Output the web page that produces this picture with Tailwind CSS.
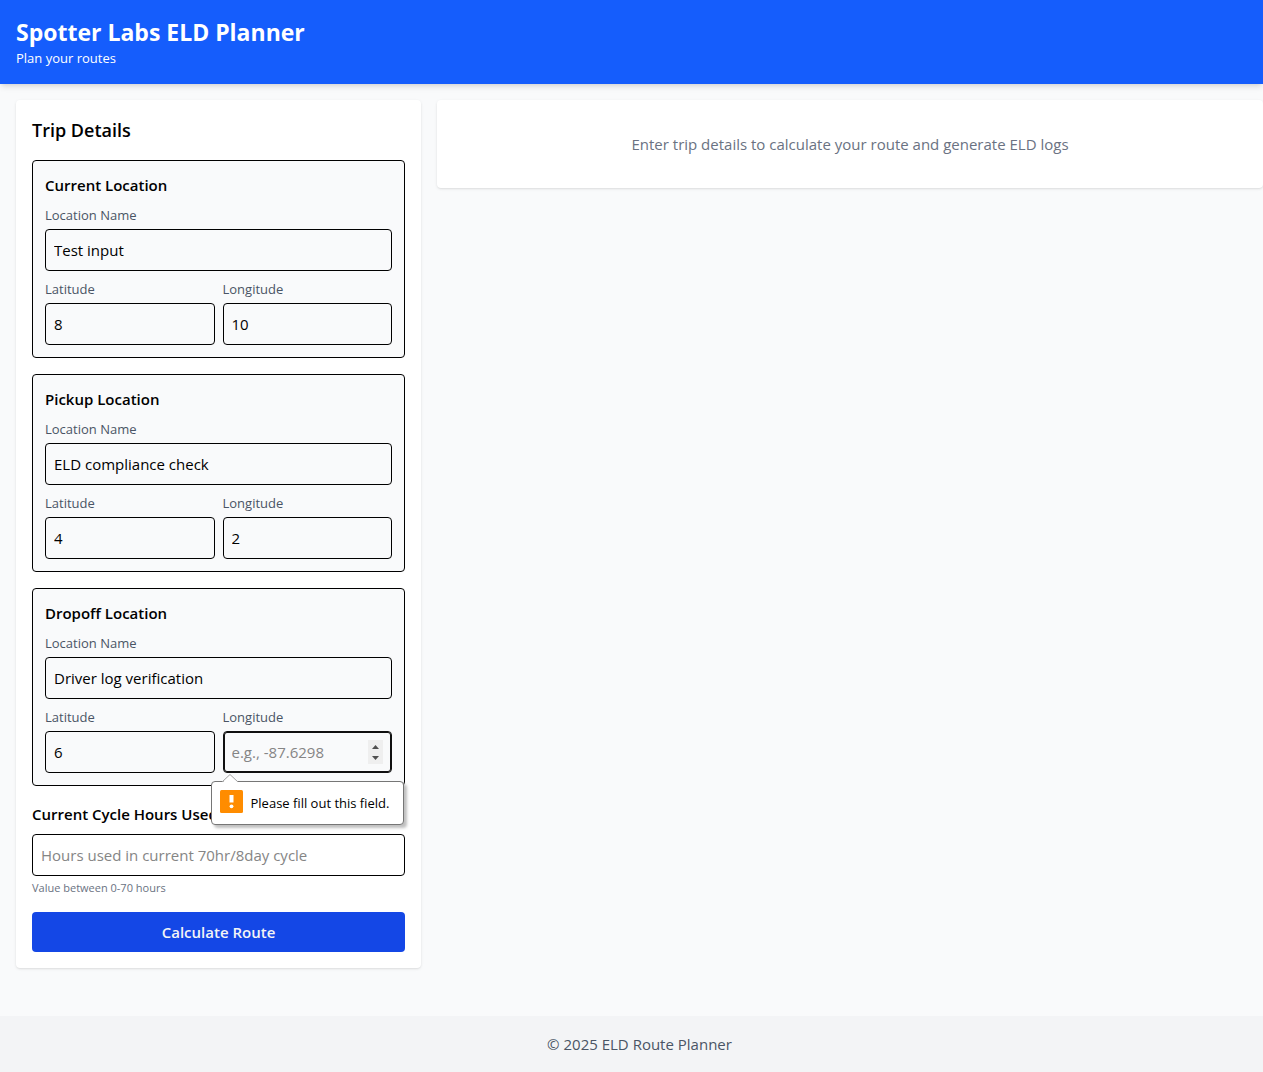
<!DOCTYPE html>
<html lang="en">
<head>
<meta charset="utf-8">
<meta name="viewport" content="width=device-width, initial-scale=1">
<title>Spotter Labs ELD Planner</title>
<script src="https://cdn.jsdelivr.net/npm/@tailwindcss/browser@4"></script>
</head>
<body class="flex min-h-screen flex-col bg-gray-50 font-['Open_Sans','Noto_Sans',sans-serif] text-[15px] leading-6 text-black">
  <header class="bg-[#155dfc] p-4 text-white shadow-md">
    <h1 class="text-[23px] leading-8 font-bold">Spotter Labs ELD Planner</h1>
    <p class="text-[13px] leading-5">Plan your routes</p>
  </header>

  <main class="grid grow grid-cols-3 items-start gap-4 py-4 pl-4">
    <section class="rounded bg-white p-4 shadow-sm">
      <h2 class="mb-4 text-[18px] leading-7 font-semibold">Trip Details</h2>
      <form class="flex flex-col gap-4" novalidate>
        <section class="rounded border border-black bg-gray-50 p-3">
          <h3 class="mb-2 font-semibold">Current Location</h3>
          <label for="cur-name" class="mb-1 block text-[13px] leading-5 text-gray-600">Location Name</label>
          <input id="cur-name" type="text" value="Test input" class="block w-full rounded border border-black p-2">
          <div class="mt-2 grid grid-cols-2 gap-2">
            <div>
              <label for="cur-lat" class="mb-1 block text-[13px] leading-5 text-gray-600">Latitude</label>
              <input id="cur-lat" type="number" value="8" class="block w-full rounded border border-black p-2">
            </div>
            <div>
              <label for="cur-lng" class="mb-1 block text-[13px] leading-5 text-gray-600">Longitude</label>
              <input id="cur-lng" type="number" value="10" class="block w-full rounded border border-black p-2">
            </div>
          </div>
        </section>

        <section class="rounded border border-black bg-gray-50 p-3">
          <h3 class="mb-2 font-semibold">Pickup Location</h3>
          <label for="pick-name" class="mb-1 block text-[13px] leading-5 text-gray-600">Location Name</label>
          <input id="pick-name" type="text" value="ELD compliance check" class="block w-full rounded border border-black p-2">
          <div class="mt-2 grid grid-cols-2 gap-2">
            <div>
              <label for="pick-lat" class="mb-1 block text-[13px] leading-5 text-gray-600">Latitude</label>
              <input id="pick-lat" type="number" value="4" class="block w-full rounded border border-black p-2">
            </div>
            <div>
              <label for="pick-lng" class="mb-1 block text-[13px] leading-5 text-gray-600">Longitude</label>
              <input id="pick-lng" type="number" value="2" class="block w-full rounded border border-black p-2">
            </div>
          </div>
        </section>

        <section class="rounded border border-black bg-gray-50 p-3">
          <h3 class="mb-2 font-semibold">Dropoff Location</h3>
          <label for="drop-name" class="mb-1 block text-[13px] leading-5 text-gray-600">Location Name</label>
          <input id="drop-name" type="text" value="Driver log verification" class="block w-full rounded border border-black p-2">
          <div class="mt-2 grid grid-cols-2 gap-2">
            <div>
              <label for="drop-lat" class="mb-1 block text-[13px] leading-5 text-gray-600">Latitude</label>
              <input id="drop-lat" type="number" value="6" class="block w-full rounded border border-black p-2">
            </div>
            <div class="relative">
              <label for="drop-lng" class="mb-1 block text-[13px] leading-5 text-gray-600">Longitude</label>
              <input id="drop-lng" type="number" placeholder="e.g., -87.6298" required aria-describedby="drop-lng-error" class="block w-full rounded border border-[#101010] p-2 ring-1 ring-[#101010] ring-inset placeholder:text-[#858585] [&::-webkit-inner-spin-button]:appearance-none">
              <!-- stepper arrows -->
              <svg class="pointer-events-none absolute right-2 bottom-2" width="16" height="25" viewBox="0 0 16 25" aria-hidden="true"><rect width="15" height="24" fill="#efefef"/><path d="M4 9 7.500 5 11 9zM4 16h7l-3.500 4z" fill="#505050"/></svg>
              <!-- validation message -->
              <div id="drop-lng-error" role="alert" class="absolute top-full -right-3 -left-3 mt-2 flex h-11 items-center gap-2 rounded border border-[#767676] bg-white px-2 text-[13px] leading-5 whitespace-nowrap shadow-[3px_3px_3px_rgba(0,0,0,0.25)]">
                <svg class="absolute -top-2 left-2.5" width="17" height="9" viewBox="0 0 17 9" aria-hidden="true"><path d="M0.5 8.5 8.5 0.5 16.5 8.5V9H.5z" fill="#fff"/><path d="M0 8 8 .5 16 8" fill="none" stroke="#a0a0a0"/></svg>
                <svg class="mb-1 shrink-0" width="23" height="23" viewBox="0 0 23 23" aria-hidden="true"><rect width="23" height="23" rx="1.5" fill="#ff8c00"/><path d="M9.500 5h4v7.500h-4z" fill="#fff"/><circle cx="11.5" cy="16.300" r="1.900" fill="#fff"/></svg>
                <span>Please fill out this field.</span>
              </div>
            </div>
          </div>
        </section>

        <div>
          <label for="cycle" class="mb-2 block font-semibold">Current Cycle Hours Used</label>
          <input id="cycle" type="number" min="0" max="70" placeholder="Hours used in current 70hr/8day cycle" class="block w-full rounded border border-black p-2 placeholder:text-[#858585]">
          <p class="mt-1 text-[11px] leading-4 text-gray-500">Value between 0-70 hours</p>
        </div>
        <button type="submit" class="rounded bg-[#1447e6] px-4 py-2 font-semibold text-gray-100">Calculate Route</button>
      </form>
    </section>

    <section class="col-span-2 rounded bg-white p-8 text-center text-gray-500 shadow-sm">
      <p>Enter trip details to calculate your route and generate ELD logs</p>
    </section>
  </main>

  <footer class="mt-8 bg-gray-100 py-4 pl-4 text-center text-gray-600">
    <p>© 2025 ELD Route Planner</p>
  </footer>
</body>
</html>
